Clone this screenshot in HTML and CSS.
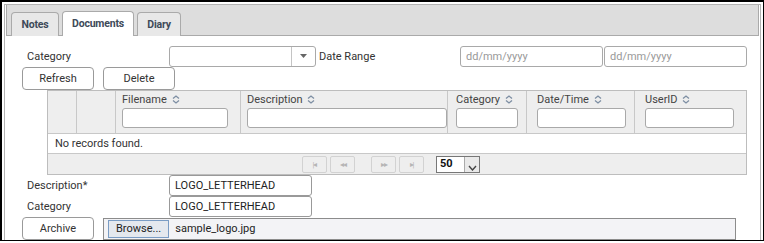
FILE: index.html
```html
<!DOCTYPE html>
<html lang="en">
<head>
    <meta charset="UTF-8">
    <title>Documents</title>
    <link rel="stylesheet" href="styles.css">
</head>
<body>
    <div class="frame">
        <div class="panel">
            <!-- Tab strip -->
            <div class="tabbar">
                <div class="tab tab-notes">Notes</div>
                <div class="tab tab-docs active">Documents</div>
                <div class="tab tab-diary">Diary</div>
            </div>

            <div class="content">
                <div class="row filter-row">
                    <label class="label">Category</label>
                    <div class="select">
                        <span class="select-arrow"><svg width="7" height="4" viewBox="0 0 7 4"><path d="M0 0h7L3.5 4z" fill="#666"/></svg></span>
                    </div>
                    <label class="label range-label">Date Range</label>
                    <input class="text-input date" placeholder="dd/mm/yyyy">
                    <input class="text-input date" placeholder="dd/mm/yyyy">
                </div>

                <div class="row button-row">
                    <button class="btn">Refresh</button>
                    <button class="btn">Delete</button>
                </div>

                <div class="grid">
                    <div class="grid-head">
                        <div class="col c-sel"></div>
                        <div class="col c-icon"></div>
                        <div class="col c-file"><span class="th">Filename <svg class="sort" width="8" height="9" viewBox="0 0 8 9"><path d="M1 3.5L4 1l3 2.5M1 5.5L4 8l3-2.5" fill="none" stroke="#7d8ea3" stroke-width="1.3"/></svg></span><input class="text-input"></div>
                        <div class="col c-desc"><span class="th">Description <svg class="sort" width="8" height="9" viewBox="0 0 8 9"><path d="M1 3.5L4 1l3 2.5M1 5.5L4 8l3-2.5" fill="none" stroke="#7d8ea3" stroke-width="1.3"/></svg></span><input class="text-input wide"></div>
                        <div class="col c-cat"><span class="th">Category <svg class="sort" width="8" height="9" viewBox="0 0 8 9"><path d="M1 3.5L4 1l3 2.5M1 5.5L4 8l3-2.5" fill="none" stroke="#7d8ea3" stroke-width="1.3"/></svg></span><input class="text-input"></div>
                        <div class="col c-date"><span class="th">Date/Time <svg class="sort" width="8" height="9" viewBox="0 0 8 9"><path d="M1 3.5L4 1l3 2.5M1 5.5L4 8l3-2.5" fill="none" stroke="#7d8ea3" stroke-width="1.3"/></svg></span><input class="text-input"></div>
                        <div class="col c-user"><span class="th">UserID <svg class="sort" width="8" height="9" viewBox="0 0 8 9"><path d="M1 3.5L4 1l3 2.5M1 5.5L4 8l3-2.5" fill="none" stroke="#7d8ea3" stroke-width="1.3"/></svg></span><input class="text-input"></div>
                    </div>
                    <div class="grid-empty">No records found.</div>
                    <div class="pager">
                        <span class="pg-btn">|◂</span>
                        <span class="pg-btn">◂◂</span>
                        <span class="pg-gap"></span>
                        <span class="pg-btn">▸▸</span>
                        <span class="pg-btn">▸|</span>
                        <div class="page-size">
                            <span class="ps-value">50</span>
                            <span class="ps-arrow"><svg width="9" height="6" viewBox="0 0 9 6"><path d="M1 1l3.5 4L8 1" fill="none" stroke="#444" stroke-width="1.4"/></svg></span>
                        </div>
                    </div>
                </div>

                <div class="row field-row">
                    <label class="label">Description*</label>
                    <input class="text-input field" value="LOGO_LETTERHEAD">
                </div>
                <div class="row field-row">
                    <label class="label">Category</label>
                    <input class="text-input field" value="LOGO_LETTERHEAD">
                </div>
                <div class="row upload-row">
                    <button class="btn">Archive</button>
                    <div class="file-box">
                        <span class="browse">Browse...</span>
                        <span class="file-name">sample_logo.jpg</span>
                    </div>
                </div>
            </div>
        </div>
    </div>
</body>
</html>
```

FILE: styles.css
```css
body {
    margin: 0;
    font-family: Roboto, 'Liberation Sans', sans-serif;
    font-size: 11px;
    color: #333;
    background: #fff;
}

.frame {
    width: 764px;
    height: 241px;
    box-sizing: border-box;
    border: 1px solid #000;
    border-left-width: 2px;
    border-top-width: 2px;
    padding: 2px 2px 0 2px;
    overflow: hidden;
}

.panel {
    height: 100%;
    box-sizing: border-box;
    border: 1px solid #b3b3b3;
    border-bottom: none;
    padding: 0 1px;
}

.tabbar {
    display: flex;
    align-items: flex-end;
    gap: 3px;
    height: 30px;
    padding-left: 4px;
    background: #dddddd;
    border: 1px solid #aaa;
    border-top: none;
}

.tab {
    box-sizing: border-box;
    height: 24px;
    line-height: 23px;
    text-align: center;
    border: 1px solid #aaa;
    border-bottom: none;
    border-radius: 4px 4px 0 0;
    background: #e8e8e8;
    font-size: 10.5px;
    font-weight: bold;
    letter-spacing: -0.2px;
    color: #3e4a59;
    margin-bottom: -1px;
}

.tab-notes { width: 48px; }
.tab-docs { width: 72px; }
.tab-diary { width: 44px; }

.tab.active {
    background: #fff;
    height: 25px;
}

.content {
    padding: 9px 0 0 15px;
}

.row {
    display: flex;
    align-items: center;
}

.label {
    width: 148px;
    padding-left: 6px;
    box-sizing: border-box;
}

.text-input {
    box-sizing: border-box;
    height: 20px;
    border: 1px solid #a9a9a9;
    border-radius: 3px;
    font-family: inherit;
    font-size: 11px;
    color: #222;
    padding: 0 5px;
    background: #fff;
}

.text-input::placeholder {
    color: #999;
}

.filter-row {
    height: 22px;
}

.select {
    width: 147px;
    height: 21px;
    box-sizing: border-box;
    border: 1px solid #a9a9a9;
    border-radius: 3px;
    display: flex;
    justify-content: flex-end;
}

.select-arrow {
    width: 23px;
    border-left: 1px solid #c4c4c4;
    display: flex;
    align-items: center;
    justify-content: center;
}

.range-label {
    padding-left: 3px;
    width: 144px;
}

.date {
    width: 143px;
    height: 21px;
    margin-right: 1px;
}

.button-row {
    gap: 9px;
    padding-left: 1px;
}

.btn {
    width: 72px;
    height: 23px;
    border: 1px solid #9a9a9a;
    border-radius: 4px;
    background: #fff;
    font-family: inherit;
    font-size: 11px;
    color: #333;
    padding: 0;
}

.grid {
    margin-left: 26px;
    width: 700px;
    border: 1px solid #bdbdbd;
    box-sizing: border-box;
}

.grid-head {
    display: flex;
    height: 42px;
    background: #eeeeee;
    border-bottom: 1px solid #c8c8c8;
}

.col {
    border-right: 1px solid #c8c8c8;
    padding: 2px 0 0 6px;
    box-sizing: border-box;
    display: flex;
    flex-direction: column;
    gap: 1px;
}

.col:last-child {
    border-right: none;
}

.th {
    height: 14px;
    line-height: 14px;
    color: #444;
}

.sort {
    margin-left: 2px;
    vertical-align: -1px;
}

.c-sel { width: 29px; }
.c-icon { width: 39px; }
.c-file { width: 125px; }
.c-desc { width: 207px; }
.c-cat { width: 79px; padding-left: 8px; }
.c-date { width: 108px; padding-left: 10px; }
.c-user { width: 111px; padding-left: 10px; }

.c-file .text-input { width: 106px; }
.c-desc .text-input { width: 200px; }
.c-cat .text-input { width: 62px; }
.c-date .text-input { width: 89px; }
.c-user .text-input { width: 89px; }

.grid-empty {
    height: 19px;
    line-height: 19px;
    padding-left: 7px;
    border-bottom: 1px solid #c8c8c8;
}

.pager {
    height: 20px;
    background: #eeeeee;
    display: flex;
    align-items: center;
    padding-left: 254px;
    gap: 3px;
}

.pg-btn {
    width: 25px;
    height: 17px;
    box-sizing: border-box;
    border: 1px solid #d2d2d2;
    border-radius: 2px;
    font-size: 8px;
    line-height: 15px;
    color: #b5b5b5;
    text-align: center;
    letter-spacing: -1px;
}

.pg-gap {
    width: 10px;
}

.page-size {
    margin-left: 9px;
    width: 44px;
    height: 17px;
    box-sizing: border-box;
    border: 1px solid #777;
    display: flex;
    background: #fff;
}

.ps-value {
    flex: 1;
    font-weight: bold;
    color: #111;
    padding-left: 3px;
    line-height: 14px;
}

.ps-arrow {
    width: 15px;
    border-left: 1px solid #aaa;
    background: #e9e9e9;
    display: flex;
    align-items: flex-end;
    justify-content: center;
    padding-bottom: 1px;
    box-sizing: border-box;
}

.field-row {
    height: 21px;
}

.field {
    width: 143px;
    height: 21px;
    border-color: #999;
}

.upload-row {
    gap: 9px;
    padding-left: 1px;
}

.file-box {
    width: 633px;
    height: 22px;
    box-sizing: border-box;
    border: 1px solid #8c8c8c;
    background: #f3f3f6;
    display: flex;
    align-items: center;
    padding-left: 4px;
    gap: 6px;
}

.browse {
    height: 16px;
    line-height: 16px;
    padding: 0 7px;
    border: 1px solid #7a9cc4;
    background: #e4e8ee;
    color: #222;
}

.file-name {
    color: #222;
}
```
